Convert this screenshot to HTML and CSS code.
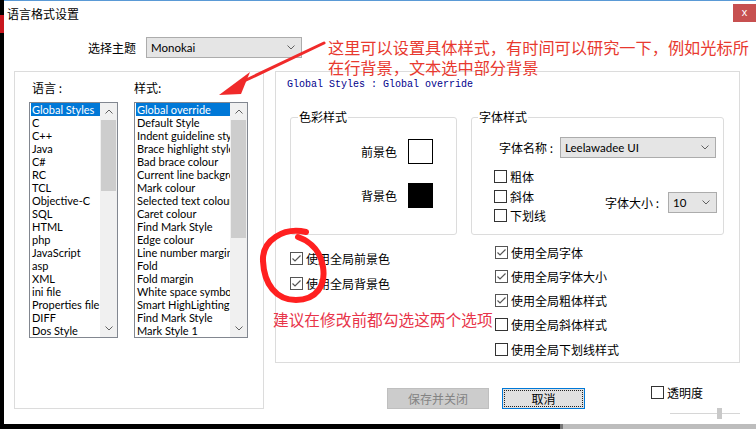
FILE: index.html
```html
<!DOCTYPE html>
<html lang="zh-CN">
<head>
    <meta charset="UTF-8">
    <title>语言格式设置</title>

    <link rel="stylesheet" href="styles.css">

</head>
<body>

<div class="desk_edge"></div>

<div class="dlg">

    <div class="dlg_title">
        <span>语言格式设置</span>
        <div class="btn_close">x</div>
    </div>

    <div class="theme_row">
        <label>选择主题</label>
        <div class="combo combo_theme">
            <span>Monokai</span>
            <svg width="8" height="5" viewBox="0 0 8 5"><polyline points="0.5,0.5 4,4 7.5,0.5" fill="none" stroke="#606060"/></svg>
        </div>
    </div>

    <div class="dlg_main">

        <!-- 左边: 语言 + 样式 列表 -->
        <div class="lang_box">
            <div class="list_col col_lang">
                <p class="list_title">语言 :</p>
                <div class="listbox">
                    <ul class="items">
                        <li class="sel">Global Styles</li>
                        <li>C</li>
                        <li>C++</li>
                        <li>Java</li>
                        <li>C#</li>
                        <li>RC</li>
                        <li>TCL</li>
                        <li>Objective-C</li>
                        <li>SQL</li>
                        <li>HTML</li>
                        <li>php</li>
                        <li>JavaScript</li>
                        <li>asp</li>
                        <li>XML</li>
                        <li>ini file</li>
                        <li>Properties file</li>
                        <li>DIFF</li>
                        <li>Dos Style</li>
                    </ul>
                    <div class="vscroll">
                        <span class="arrow"><svg width="8" height="5" viewBox="0 0 8 5"><polyline points="0.5,4.5 4,1 7.5,4.5" fill="none" stroke="#606060"/></svg></span>
                        <div class="track"><div class="thumb thumb_lang"></div></div>
                        <span class="arrow"><svg width="8" height="5" viewBox="0 0 8 5"><polyline points="0.5,0.5 4,4 7.5,0.5" fill="none" stroke="#606060"/></svg></span>
                    </div>
                </div>
            </div>

            <div class="list_col col_style">
                <p class="list_title">样式:</p>
                <div class="listbox">
                    <ul class="items">
                        <li class="sel">Global override</li>
                        <li>Default Style</li>
                        <li>Indent guideline style</li>
                        <li>Brace highlight style</li>
                        <li>Bad brace colour</li>
                        <li>Current line background colour</li>
                        <li>Mark colour</li>
                        <li>Selected text colour</li>
                        <li>Caret colour</li>
                        <li>Find Mark Style</li>
                        <li>Edge colour</li>
                        <li>Line number margin</li>
                        <li>Fold</li>
                        <li>Fold margin</li>
                        <li>White space symbol</li>
                        <li>Smart HighLighting</li>
                        <li>Find Mark Style</li>
                        <li>Mark Style 1</li>
                    </ul>
                    <div class="vscroll">
                        <span class="arrow"><svg width="8" height="5" viewBox="0 0 8 5"><polyline points="0.5,4.5 4,1 7.5,4.5" fill="none" stroke="#606060"/></svg></span>
                        <div class="track"><div class="thumb thumb_style"></div></div>
                        <span class="arrow"><svg width="8" height="5" viewBox="0 0 8 5"><polyline points="0.5,0.5 4,4 7.5,0.5" fill="none" stroke="#606060"/></svg></span>
                    </div>
                </div>
            </div>
        </div>

        <!-- 右边: 样式设置 -->
        <div class="right_col">
            <div class="style_panel">
                <p class="preview">Global Styles : Global override</p>

                <div class="groups">
                    <div class="group group_color">
                        <p class="group_title">色彩样式</p>
                        <div class="color_rows">
                            <div class="color_row"><span>前景色</span><span class="swatch fg"></span></div>
                            <div class="color_row"><span>背景色</span><span class="swatch bg"></span></div>
                        </div>
                    </div>

                    <div class="group group_font">
                        <p class="group_title">字体样式</p>
                        <div class="font_name">
                            <span class="lbl_name">字体名称 :</span>
                            <div class="combo combo_font">
                                <span>Leelawadee UI</span>
                                <svg width="8" height="5" viewBox="0 0 8 5"><polyline points="0.5,0.5 4,4 7.5,0.5" fill="none" stroke="#606060"/></svg>
                            </div>
                        </div>
                        <div class="font_opts">
                            <div class="font_checks">
                                <label class="chk"><span class="box"></span>粗体</label>
                                <label class="chk"><span class="box"></span>斜体</label>
                                <label class="chk"><span class="box"></span>下划线</label>
                            </div>
                            <div class="font_size">
                                <span>字体大小 :</span>
                                <div class="combo combo_size">
                                    <span>10</span>
                                    <svg width="8" height="5" viewBox="0 0 8 5"><polyline points="0.5,0.5 4,4 7.5,0.5" fill="none" stroke="#606060"/></svg>
                                </div>
                            </div>
                        </div>
                    </div>
                </div>

                <div class="global_checks">
                    <div class="checks_left">
                        <label class="chk"><span class="box on"><svg width="11" height="11" viewBox="0 0 11 11"><polyline points="1.5,5.5 4,8 9.5,2.5" fill="none" stroke="#555" stroke-width="1.2"/></svg></span>使用全局前景色</label>
                        <label class="chk"><span class="box on"><svg width="11" height="11" viewBox="0 0 11 11"><polyline points="1.5,5.5 4,8 9.5,2.5" fill="none" stroke="#555" stroke-width="1.2"/></svg></span>使用全局背景色</label>
                    </div>
                    <div class="checks_right">
                        <label class="chk"><span class="box on"><svg width="11" height="11" viewBox="0 0 11 11"><polyline points="1.5,5.5 4,8 9.5,2.5" fill="none" stroke="#555" stroke-width="1.2"/></svg></span>使用全局字体</label>
                        <label class="chk"><span class="box on"><svg width="11" height="11" viewBox="0 0 11 11"><polyline points="1.5,5.5 4,8 9.5,2.5" fill="none" stroke="#555" stroke-width="1.2"/></svg></span>使用全局字体大小</label>
                        <label class="chk"><span class="box on"><svg width="11" height="11" viewBox="0 0 11 11"><polyline points="1.5,5.5 4,8 9.5,2.5" fill="none" stroke="#555" stroke-width="1.2"/></svg></span>使用全局粗体样式</label>
                        <label class="chk"><span class="box"></span>使用全局斜体样式</label>
                        <label class="chk"><span class="box"></span>使用全局下划线样式</label>
                    </div>
                </div>
            </div>

            <div class="dlg_bottom">
                <button class="btn btn_save" disabled>保存并关闭</button>
                <button class="btn btn_cancel"><span>取消</span></button>
                <div class="trans">
                    <label class="chk"><span class="box"></span>透明度</label>
                    <div class="slider"><span class="slider_thumb"></span></div>
                </div>
            </div>
        </div>

    </div>
</div>

<div class="taskbar"></div>

<!-- 红色标注 -->
<svg class="marks" width="756" height="429" viewBox="0 0 756 429">
    <path d="M324 43 L244 81" stroke="#f02a2a" stroke-width="3" stroke-linecap="round" fill="none"/>
    <polygon points="219,95 250,72 241,94" fill="#f02a2a"/>
    <path d="M306 232 C284 227 262 240 263 261 C264 284 276 300 296 300 C316 300 326 286 323 267 C321 253 312 242 298 237" stroke="#ff2020" stroke-width="6" stroke-linecap="round" fill="none"/>
</svg>
<p class="note note_top">这里可以设置具体样式，有时间可以研究一下，例如光标所<br>在行背景，文本选中部分背景</p>
<p class="note note_tip">建议在修改前都勾选这两个选项</p>

</body>
</html>
```

FILE: styles.css
```css
*{
    margin: 0px;
    padding: 0px;
    box-sizing: border-box;
}
body{
    width: 756px;
    height: 429px;
    overflow: hidden;
    position: relative;
    background-color: #000;
    font-family: "Noto Sans CJK SC", sans-serif;
    font-size: 12px;
    color: #000;
}

.desk_edge{
    position: absolute;
    left: 0px;
    top: 15px;
    width: 4px;
    height: 18px;
    background-color: #c8161d;
}

.dlg{
    margin-left: 4px;
    width: 752px;
    height: 424px;
    background-color: #fff;
    border-top: 1px solid #5a9ad6;
}

.dlg_title{
    height: 29px;
    display: flex;
    justify-content: space-between;
    align-items: flex-start;
    padding-left: 3px;
}
.dlg_title > span{
    line-height: 16px;
    margin-top: 5px;
}
.btn_close{
    width: 23px;
    height: 18px;
    margin-top: 3px;
    background-color: #c75050;
    color: #fff;
    font-family: "Liberation Sans", sans-serif;
    font-size: 11px;
    line-height: 17px;
    text-align: center;
}

.theme_row{
    display: flex;
    align-items: center;
    gap: 10px;
    margin-top: 7px;
    padding-left: 84px;
}

.combo{
    height: 21px;
    display: flex;
    align-items: center;
    justify-content: space-between;
    padding: 0px 6px 0px 4px;
    background-color: #e5e5e5;
    border: 1px solid #acacac;
    font-family: Lato, sans-serif;
    font-size: 11.5px;
}
.combo_theme{
    width: 156px;
}
.combo_font{
    width: 156px;
}
.combo_size{
    width: 49px;
}

.dlg_main{
    display: flex;
    gap: 11px;
    margin-top: 13px;
    padding-left: 10px;
}

/* 左边列表 */
.lang_box{
    width: 250px;
    height: 338px;
    border: 1px solid #dcdcdc;
    display: flex;
    gap: 16px;
    padding: 8px 0px 0px 14px;
}
.list_title{
    line-height: 16px;
    margin-bottom: 6px;
}
.col_lang .list_title{
    padding-left: 3px;
}
.listbox{
    height: 236px;
    display: flex;
    border: 1px solid #828790;
    background-color: #fff;
}
.col_lang .listbox{
    width: 89px;
}
.col_style .listbox{
    width: 114px;
}
.items{
    flex: 1;
    min-width: 0;
    list-style: none;
    padding-left: 1px;
    overflow: hidden;
    font-family: Lato, sans-serif;
    font-size: 11px;
}
.items li{
    height: 13px;
    line-height: 13px;
    padding-left: 1px;
    white-space: nowrap;
    overflow: hidden;
}
.items li.sel{
    background-color: #0078d7;
    color: #fff;
}
.vscroll{
    width: 17px;
    display: flex;
    flex-direction: column;
    background-color: #f0f0f0;
}
.arrow{
    height: 17px;
    display: flex;
    align-items: center;
    justify-content: center;
}
.track{
    flex: 1;
}
.thumb{
    margin: 0px 1px;
    background-color: #cdcdcd;
}
.thumb_lang{
    height: 71px;
}
.thumb_style{
    height: 118px;
}

/* 右边面板 */
.right_col{
    width: 465px;
}
.style_panel{
    height: 292px;
    border: 1px solid #dcdcdc;
    padding-top: 7px;
}
.preview{
    margin-left: 11px;
    font-family: "Liberation Mono", monospace;
    font-size: 10px;
    line-height: 12px;
    color: #00008b;
}
.groups{
    display: flex;
    gap: 14px;
    margin: 26px 0px 0px 14px;
}
.group{
    height: 118px;
    border: 1px solid #dcdcdc;
    border-radius: 3px;
}
.group_color{
    width: 167px;
}
.group_font{
    width: 253px;
}
.group_title{
    width: fit-content;
    margin: -9px 0px 0px 7px;
    padding: 0px 1px;
    line-height: 16px;
    background-color: #fff;
}
.group_font .group_title{
    margin-left: 6px;
}

.color_rows{
    display: flex;
    flex-direction: column;
    align-items: flex-end;
    gap: 19px;
    padding: 14px 23px 0px 0px;
}
.color_row{
    display: flex;
    align-items: center;
    gap: 11px;
}
.swatch{
    width: 25px;
    height: 25px;
    border: 1px solid #000;
}
.swatch.fg{
    background-color: #fff;
}
.swatch.bg{
    background-color: #000;
}

.font_name{
    display: flex;
    align-items: center;
    gap: 7px;
    margin-top: 12px;
    padding-left: 27px;
}
.lbl_name{
    width: 54px;
    white-space: nowrap;
}
.font_opts{
    display: flex;
    margin-top: 9px;
}
.font_checks{
    display: flex;
    flex-direction: column;
    padding-left: 22px;
}
.font_checks .chk{
    height: 19.5px;
}
.font_size{
    display: flex;
    align-items: center;
    gap: 9px;
    margin: 13px 6px 0px auto;
}

.chk{
    display: flex;
    align-items: center;
    gap: 3px;
    white-space: nowrap;
}
.box{
    width: 13px;
    height: 13px;
    border: 1px solid #333;
    background-color: #fff;
    display: flex;
    align-items: center;
    justify-content: center;
}
.box.on{
    border-color: #555;
}

.global_checks{
    display: flex;
    margin: 5px 0px 0px 14px;
}
.checks_left{
    width: 205px;
    padding-top: 6px;
    display: flex;
    flex-direction: column;
}
.checks_left .chk{
    height: 25px;
}
.checks_right{
    display: flex;
    flex-direction: column;
}
.checks_right .chk{
    height: 24.25px;
}

/* 底部按钮 */
.dlg_bottom{
    display: flex;
    align-items: flex-start;
    margin-top: 25px;
    padding-left: 112px;
}
.btn{
    height: 21px;
    font-family: "Noto Sans CJK SC", sans-serif;
    font-size: 12px;
}
.btn_save{
    width: 102px;
    background-color: #cccccc;
    border: 1px solid #bfbfbf;
    color: #838383;
}
.btn_cancel{
    width: 83px;
    margin-left: 13px;
    padding: 1px;
    background-color: #e1e1e1;
    border: 1px solid #0078d7;
    color: #000;
}
.btn_cancel span{
    display: block;
    height: 100%;
    line-height: 15px;
    border: 1px dotted #222;
}
.trans{
    margin: -4px 0px 0px 66px;
}
.trans .chk{
    height: 16px;
}
.slider{
    position: relative;
    width: 70px;
    height: 11px;
    margin: 8px 0px 0px 19px;
    background: linear-gradient(#fff 5px, #d6d6d6 5px, #d6d6d6 6px, #fff 6px);
}
.slider_thumb{
    position: absolute;
    left: 47px;
    top: 0px;
    width: 5px;
    height: 11px;
    background-color: #c9c9c9;
}

.taskbar{
    height: 5px;
    margin-left: 560px;
    background-color: #bdbdbd;
    border-left: 3px solid #777;
}

/* 红色标注 */
.marks{
    position: absolute;
    left: 0px;
    top: 0px;
    pointer-events: none;
}
.note{
    position: absolute;
    white-space: nowrap;
    font-family: "Noto Sans CJK SC", sans-serif;
}
.note_top{
    left: 328px;
    top: 37px;
    font-size: 16.2px;
    line-height: 20px;
    color: #e8392f;
}
.note_tip{
    left: 273px;
    top: 310px;
    font-size: 15.7px;
    line-height: 20px;
    color: #e8354a;
}
```
